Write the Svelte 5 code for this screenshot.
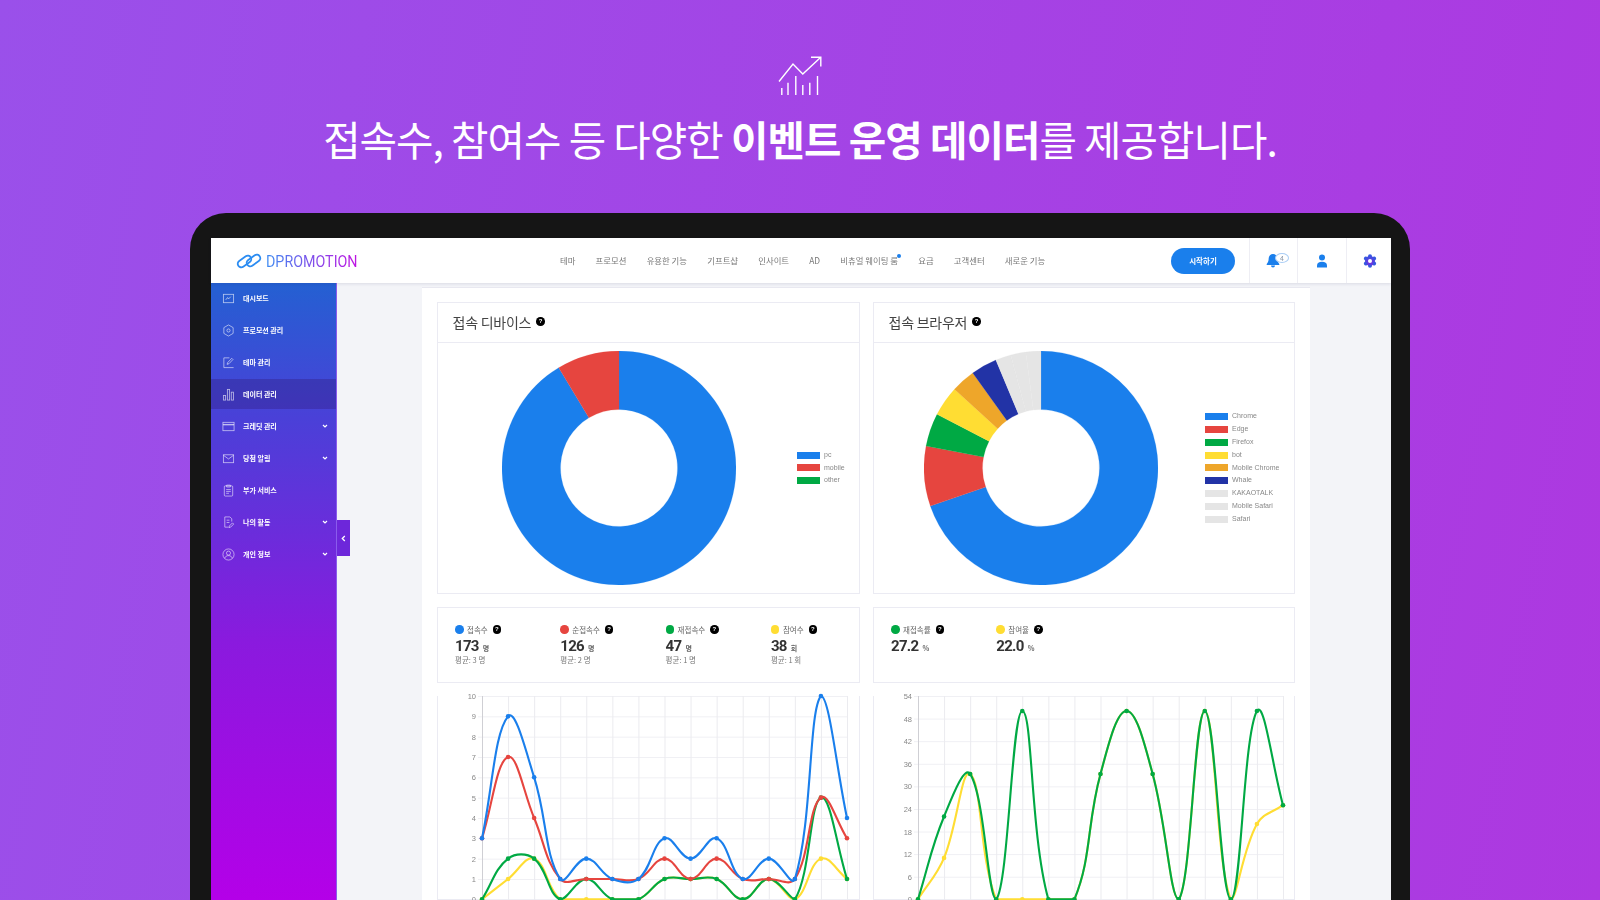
<script>
	const navItems = ['테마', '프로모션', '유용한 기능', '기프트샵', '인사이트', 'AD', '비츄얼 웨이팅 룸', '요금', '고객센터', '새로운 기능'];

	const menu = [
		{ label: '대시보드', icon: 'board' },
		{ label: '프로모션 관리', icon: 'hex' },
		{ label: '테마 관리', icon: 'theme' },
		{ label: '데이터 관리', icon: 'bars', active: true },
		{ label: '크레딧 관리', icon: 'card', more: true },
		{ label: '당첨 알림', icon: 'mail', more: true },
		{ label: '부가 서비스', icon: 'clip' },
		{ label: '나의 활동', icon: 'doc', more: true },
		{ label: '개인 정보', icon: 'user', more: true }
	];

	const BLUE = '#1a7fec';
	const RED = '#e6453f';
	const GREEN = '#00a944';
	const YELLOW = '#ffdd33';
	const ORANGE = '#eea62a';
	const NAVY = '#2233a6';
	const GREY = '#e5e5e5';

	const devices = [
		{ name: 'pc', color: BLUE, end: 329 },
		{ name: 'mobile', color: RED, end: 360 },
		{ name: 'other', color: GREEN, end: 360 }
	];

	const browsers = [
		{ name: 'Chrome', color: BLUE, end: 251 },
		{ name: 'Edge', color: RED, end: 280.8 },
		{ name: 'Firefox', color: GREEN, end: 297.3 },
		{ name: 'bot', color: YELLOW, end: 312.3 },
		{ name: 'Mobile Chrome', color: ORANGE, end: 324.3 },
		{ name: 'Whale', color: NAVY, end: 337.3 },
		{ name: 'KAKAOTALK', color: GREY, end: 345 },
		{ name: 'Mobile Safari', color: GREY, end: 352.5 },
		{ name: 'Safari', color: GREY, end: 360 }
	];

	const visitStats = [
		{ label: '접속수', color: BLUE, value: '173', unit: '명', avg: '평균: 3 명' },
		{ label: '순접속수', color: RED, value: '126', unit: '명', avg: '평균: 2 명' },
		{ label: '재접속수', color: GREEN, value: '47', unit: '명', avg: '평균: 1 명' },
		{ label: '참여수', color: YELLOW, value: '38', unit: '회', avg: '평균: 1 회' }
	];

	const rateStats = [
		{ label: '재접속률', color: GREEN, value: '27.2', unit: '%' },
		{ label: '참여율', color: YELLOW, value: '22.0', unit: '%' }
	];

	const visitSeries = [
		{ color: YELLOW, data: [0, 1, 2, 0, 0, 0, 0, 1, 1, 1, 0, 1, 0, 2, 1] },
		{ color: GREEN, data: [0, 2, 2, 0, 1, 0, 0, 1, 1, 1, 0, 1, 0, 5, 1] },
		{ color: RED, data: [3, 7, 4, 1, 1, 1, 1, 2, 1, 2, 1, 1, 1, 5, 3] },
		{ color: BLUE, data: [3, 9, 6, 1, 2, 1, 1, 3, 2, 3, 1, 2, 1, 10, 4] }
	];

	const rateSeries = [
		{ color: YELLOW, data: [0, 11, 33.3, 0, 0, 0, 0, 33.3, 50, 33.3, 0, 50, 0, 20, 25] },
		{ color: GREEN, data: [0, 22, 33.3, 0, 50, 0, 0, 33.3, 50, 33.3, 0, 50, 0, 50, 25] }
	];

	const PLOT = { left: 44, right: 409, top: 0, bottom: 203.3 };

	function slices(items) {
		let start = 0;
		const out = [];
		for (const item of items) {
			if (item.end > start) out.push({ color: item.color, d: ring(start, item.end) });
			start = item.end;
		}
		return out;
	}

	function ring(a, b, R = 117, r = 58.5, c = 117) {
		const pt = (rad, deg) => {
			const t = (deg * Math.PI) / 180;
			return `${(c + rad * Math.sin(t)).toFixed(2)} ${(c - rad * Math.cos(t)).toFixed(2)}`;
		};
		const large = b - a > 180 ? 1 : 0;
		return `M${pt(R, a)}A${R} ${R} 0 ${large} 1 ${pt(R, b)}L${pt(r, b)}A${r} ${r} 0 ${large} 0 ${pt(r, a)}Z`;
	}

	// same curve as chart.js: tension .4 and control points kept inside the plot
	function points(data, max) {
		const step = (PLOT.right - PLOT.left) / (data.length - 1);
		return data.map((v, i) => ({
			x: PLOT.left + i * step,
			y: PLOT.bottom - (v / max) * (PLOT.bottom - PLOT.top)
		}));
	}

	function curve(data, max) {
		const pts = points(data, max);
		const cap = (v, lo, hi) => Math.min(hi, Math.max(lo, v));
		const cps = pts.map((p, i) => {
			const a = pts[i - 1] || p;
			const b = pts[i + 1] || p;
			const d01 = Math.hypot(p.x - a.x, p.y - a.y);
			const d12 = Math.hypot(b.x - p.x, b.y - p.y);
			const sum = d01 + d12 || 1;
			const fa = (0.4 * d01) / sum;
			const fb = (0.4 * d12) / sum;
			return {
				px: cap(p.x - fa * (b.x - a.x), PLOT.left, PLOT.right),
				py: cap(p.y - fa * (b.y - a.y), PLOT.top, PLOT.bottom),
				nx: cap(p.x + fb * (b.x - a.x), PLOT.left, PLOT.right),
				ny: cap(p.y + fb * (b.y - a.y), PLOT.top, PLOT.bottom)
			};
		});
		let d = `M${pts[0].x} ${pts[0].y}`;
		for (let i = 1; i < pts.length; i++) {
			d += `C${cps[i - 1].nx} ${cps[i - 1].ny} ${cps[i].px} ${cps[i].py} ${pts[i].x} ${pts[i].y}`;
		}
		return d;
	}

	function yTicks(max, by) {
		const out = [];
		for (let v = 0; v <= max; v += by) {
			out.push({ v, y: PLOT.bottom - (v / max) * (PLOT.bottom - PLOT.top) });
		}
		return out;
	}

	const xTicks = Array.from({ length: 15 }, (_, i) => PLOT.left + (i * (PLOT.right - PLOT.left)) / 14);

	const charts = [
		{ series: visitSeries, max: 10, by: 1, stats: visitStats },
		{ series: rateSeries, max: 54, by: 6, stats: rateStats }
	];

	const gearLobes = [0, 60, 120, 180, 240, 300];
</script>

<div class="page">
	<section class="hero">
		<svg class="hero-icon" width="46" height="42" viewBox="0 0 46 42" fill="none" stroke="#fff" stroke-width="1.4">
			<path d="M2 26.500 16 9l9.800 10L43.500 2.500" />
			<path d="M34 2.200h9.800V11.500" />
			<path d="M4.800 40v-7M11 40V27.700M18.800 40V21M25.800 40V30M32.800 40V27.700M40.500 40V21" />
		</svg>
		<h1>접속수, 참여수 등 다양한 <b>이벤트 운영 데이터</b>를 제공합니다.</h1>
	</section>

	<div class="frame">
		<div class="screen">
			<header>
				<div class="logo">
					<svg width="26" height="16" viewBox="0 0 26 16" fill="none" stroke="#2b8cf2" stroke-width="1.800">
						<rect x="1" y="5" width="15" height="7" rx="3.500" transform="rotate(-35 8.500 8.500)" />
						<rect x="10" y="4" width="15" height="7" rx="3.500" transform="rotate(-35 17.500 7.500)" />
					</svg>
					<span>DPROMOTION</span>
				</div>
				<nav>
					{#each navItems as item, i}
						<span class="nav-item" class:dotted={i === 6}>{item}</span>
					{/each}
				</nav>
				<div class="actions">
					<button>시작하기</button>
					<div class="cell bell">
						<svg width="14" height="15" viewBox="0 0 14 15" fill="#1a7fec">
							<path d="M7 1a4.300 4.300 0 0 0-4.300 4.300c0 3-1 4.700-2 5.700v.9h12.600V11c-1-1-2-2.700-2-5.700A4.300 4.300 0 0 0 7 1ZM5 12.600a2 2 0 0 0 4 0Z" />
						</svg>
						<span class="badge">4</span>
					</div>
					<div class="cell">
						<svg width="12" height="14" viewBox="0 0 12 14" fill="#1a7fec">
							<circle cx="6" cy="3.500" r="3" />
							<path d="M1 13.500V11.500C1 9 3 7.800 6 7.800s5 1.200 5 3.700v2Z" />
						</svg>
					</div>
					<div class="cell last">
						<svg width="14" height="14" viewBox="0 0 14 14">
							<defs>
								<linearGradient id="gear" gradientUnits="userSpaceOnUse" x1="0" y1="0" x2="0" y2="14">
									<stop offset="0" stop-color="#2b5ee0" />
									<stop offset="1" stop-color="#9a14e0" />
								</linearGradient>
							</defs>
							<circle cx="7" cy="7" r="5" fill="url(#gear)" />
							{#each gearLobes as deg}
								<circle cx="7" cy="2.200" r="2" fill="url(#gear)" transform="rotate({deg} 7 7)" />
							{/each}
							<circle cx="7" cy="7" r="2" fill="#fff" />
						</svg>
					</div>
				</div>
			</header>

			<div class="body">
				<aside>
					<ul>
						{#each menu as item}
							<li class:active={item.active}>
								<svg width="13" height="13" viewBox="0 0 14 14" fill="none" stroke="#fff" stroke-opacity=".65" stroke-width=".9">
									{#if item.icon === 'board'}
										<rect x="1.500" y="2.500" width="11" height="9" />
										<path d="M4 8.500 6 6l1 1.500L9.500 5" />
									{:else if item.icon === 'hex'}
										<path d="M7 1l5 2.900v6.200L7 13l-5-2.900V3.900Z" />
										<circle cx="7" cy="7" r="1.700" />
									{:else if item.icon === 'theme'}
										<path d="M2 2v10.500h10.500M2 2h6" />
										<path d="M5.500 9l.6-2 4.400-4.500 1.300 1.300L7.500 8.300Z" />
									{:else if item.icon === 'bars'}
										<rect x="1.500" y="8" width="2.400" height="5" />
										<rect x="5.800" y="1.500" width="2.400" height="11.500" />
										<rect x="10" y="4.500" width="2.400" height="8.500" />
									{:else if item.icon === 'card'}
										<rect x="1" y="2.500" width="12" height="9" />
										<path d="M1 5h12" stroke-width="1.500" />
									{:else if item.icon === 'mail'}
										<rect x="1.500" y="3" width="11" height="8.500" />
										<path d="m1.500 3.500 5.500 4 5.500-4" />
									{:else if item.icon === 'clip'}
										<rect x="2.500" y="2" width="9" height="11" rx="1" />
										<path d="M5 1.200h4v2H5ZM4.500 6h5M4.500 8h5M4.500 10h3" />
									{:else if item.icon === 'doc'}
										<path d="M10.500 6V3L8.500 1H3v11h4" />
										<path d="M5 4.500h3M5 7h3M7.500 12.500l.5-1.800 3.300-3.300 1.300 1.300-3.300 3.300Z" />
									{:else}
										<circle cx="7" cy="7" r="6" />
										<circle cx="7" cy="5.500" r="2.200" />
										<path d="M3 11c.5-2 2-2.800 4-2.800s3.500.8 4 2.800" />
									{/if}
								</svg>
								<span>{item.label}</span>
								{#if item.more}
									<svg class="chev" width="6" height="5" viewBox="0 0 6 5" fill="none" stroke="#fff" stroke-width="1.200">
										<path d="m1 1 2 2 2-2" />
									</svg>
								{/if}
							</li>
						{/each}
					</ul>
					<div class="collapse">
						<svg width="5" height="7" viewBox="0 0 5 7" fill="none" stroke="#fff" stroke-width="1.300">
							<path d="M3.800 1 1.300 3.500l2.500 2.500" />
						</svg>
					</div>
				</aside>

				<main>
					<div class="panel">
						<div class="card donut devices">
							<h2>접속 디바이스 <i class="help big">?</i></h2>
							<div class="donut-body">
								<svg width="234" height="234" viewBox="0 0 234 234">
									{#each slices(devices) as s}
										<path d={s.d} fill={s.color} stroke={s.color} stroke-width=".2" />
									{/each}
								</svg>
								<ul class="legend">
									{#each devices as item}
										<li><em style="background:{item.color}"></em>{item.name}</li>
									{/each}
								</ul>
							</div>
						</div>

						<div class="card donut browsers">
							<h2>접속 브라우저 <i class="help big">?</i></h2>
							<div class="donut-body">
								<svg width="234" height="234" viewBox="0 0 234 234">
									{#each slices(browsers) as s}
										<path d={s.d} fill={s.color} stroke={s.color} stroke-width=".2" />
									{/each}
								</svg>
								<ul class="legend">
									{#each browsers as item}
										<li><em style="background:{item.color}"></em>{item.name}</li>
									{/each}
								</ul>
							</div>
						</div>

						{#each charts as chart}
							<div class="card stats">
								{#each chart.stats as stat}
									<div class="stat">
										<div class="stat-label">
											<em style="background:{stat.color}"></em>{stat.label}<i class="help">?</i>
										</div>
										<div class="stat-value">{stat.value} <small>{stat.unit}</small></div>
										{#if stat.avg}<div class="stat-avg">{stat.avg}</div>{/if}
									</div>
								{/each}
							</div>
						{/each}

						{#each charts as chart}
							<div class="card line">
								<svg width="420" height="206" viewBox="0 0 420 206">
									{#each yTicks(chart.max, chart.by) as t}
										<line x1={PLOT.left - 4} x2={PLOT.right} y1={t.y + 0.5} y2={t.y + 0.5} stroke="#f0f0f4" />
										<text x={PLOT.left - 6} y={t.y + 3}>{t.v}</text>
									{/each}
									{#each xTicks as x, i}
										<line x1={x + 0.5} x2={x + 0.5} y1={PLOT.top} y2={PLOT.bottom + 4} stroke={i === 0 ? '#cfcfd4' : '#ebebef'} />
									{/each}
									{#each chart.series as s}
										<path d={curve(s.data, chart.max)} fill="none" stroke={s.color} stroke-width="2.100" />
										{#each points(s.data, chart.max) as p}
											<circle cx={p.x} cy={p.y} r="2.300" fill={s.color} />
										{/each}
									{/each}
								</svg>
							</div>
						{/each}
					</div>
				</main>
			</div>
		</div>
	</div>
</div>

<style>
	:global(body) {
		overflow: hidden;
	}

	.page {
		height: 900px;
		overflow: hidden;
		background: linear-gradient(100deg, #9a50ea, #ad38e0);
		font-family: 'Noto Sans CJK KR', 'Noto Sans', sans-serif;
		color: #444;
	}

	.hero {
		height: 213px;
		padding-top: 55px;
		box-sizing: border-box;
		display: flex;
		flex-direction: column;
		align-items: center;
		color: #fff;
	}

	.hero-icon {
		display: block;
	}

	h1 {
		margin: 14px 0 0;
		font-size: 40.700px;
		line-height: 56px;
		font-weight: 400;
		letter-spacing: -0.95px;
		white-space: nowrap;
	}

	h1 b {
		font-weight: 700;
	}

	.frame {
		width: 1220px;
		height: 687px;
		margin: 0 auto;
		padding: 25px 19px 0 21px;
		box-sizing: border-box;
		background: #151515;
		border-radius: 36px 36px 0 0;
	}

	.screen {
		height: 662px;
		display: flex;
		flex-direction: column;
		background: #f3f4f8;
		filter: blur(0.3px);
	}

	header {
		height: 45px;
		flex: none;
		display: flex;
		align-items: center;
		background: #fff;
		box-shadow: 0 1px 3px rgba(40, 40, 90, 0.12);
		position: relative;
		z-index: 2;
	}

	.logo {
		width: 349px;
		flex: none;
		display: flex;
		align-items: center;
		gap: 4px;
		padding-left: 25px;
		box-sizing: border-box;
	}

	.logo span {
		display: inline-block;
		font-family: Roboto, sans-serif;
		font-size: 17px;
		background: linear-gradient(90deg, #3d8cf2, #c012e2);
		-webkit-background-clip: text;
		background-clip: text;
		color: transparent;
		transform: scaleX(0.84);
		transform-origin: left center;
	}

	nav {
		display: flex;
		gap: 20.200px;
		margin-top: -2px;
		font-size: 8.400px;
		color: #777;
	}

	.nav-item {
		position: relative;
		white-space: nowrap;
	}

	.dotted::after {
		content: '';
		position: absolute;
		right: -3px;
		top: 0;
		width: 4px;
		height: 4px;
		border-radius: 50%;
		background: #1a7fec;
	}

	.actions {
		margin-left: auto;
		height: 100%;
		display: flex;
		align-items: center;
	}

	button {
		width: 64px;
		height: 26px;
		margin-right: 14px;
		padding: 0;
		border: 0;
		border-radius: 13px;
		background: #1a7fec;
		color: #fff;
		font: 700 7.500px 'Noto Sans CJK KR', sans-serif;
	}

	.cell {
		width: 49px;
		height: 100%;
		display: flex;
		align-items: center;
		justify-content: center;
		border-left: 1px solid #eeeef4;
		box-sizing: border-box;
		position: relative;
	}

	.cell.last {
		width: 45px;
		padding-left: 2px;
	}

	.bell {
		width: 48px;
		padding-right: 2px;
	}

	.badge {
		position: absolute;
		left: 25px;
		top: 15px;
		width: 12px;
		height: 8px;
		border: 1px solid #a9cdf5;
		border-radius: 50%;
		background: #fff;
		font-size: 7px;
		line-height: 8px;
		text-align: center;
		color: #8a97a8;
	}

	.body {
		flex: 1;
		min-height: 0;
		display: flex;
	}

	aside {
		width: 126px;
		flex: none;
		position: relative;
		box-sizing: border-box;
		border-right: 1px solid #8a5cec;
		background: linear-gradient(#2460d2, #4a40d8 22%, #8a1ade 58%, #b400e8);
	}

	aside ul {
		margin: -1px 0 0;
		padding: 0;
		list-style: none;
	}

	aside li {
		height: 32px;
		display: flex;
		align-items: center;
		gap: 8px;
		padding: 0 8px 0 11px;
		box-sizing: border-box;
		font-size: 7px;
		font-weight: 700;
		color: #fff;
		position: relative;
	}

	aside li.active::before {
		content: '';
		position: absolute;
		inset: 1px 0;
		background: rgba(50, 30, 130, 0.38);
	}

	aside li svg,
	aside li span {
		position: relative;
	}

	.chev {
		margin-left: auto;
	}

	.collapse {
		position: absolute;
		top: 237px;
		right: -14px;
		width: 13px;
		height: 36px;
		display: flex;
		align-items: center;
		justify-content: flex-start;
		padding-left: 4px;
		box-sizing: border-box;
		background: #6d27da;
	}

	main {
		flex: 1;
		min-width: 0;
		padding: 4px 81px 0 85px;
		overflow: hidden;
	}

	.panel {
		height: 100%;
		box-sizing: border-box;
		padding: 14px 15px 0 15px;
		display: grid;
		grid-template-columns: 423px 422px;
		grid-template-rows: 292px 76px 1fr;
		gap: 13px;
		background: #fff;
		border-top: 1px solid #e8e8f0;
	}

	.card {
		border: 1px solid #ebebf3;
		box-sizing: border-box;
		min-height: 0;
	}

	h2 {
		height: 37px;
		margin: 0;
		padding: 0 0 2px 14.500px;
		display: flex;
		align-items: center;
		gap: 5px;
		font-size: 14px;
		font-weight: 400;
		letter-spacing: -0.25px;
		color: #444;
		border-bottom: 1px solid #ebebf3;
		box-sizing: content-box;
	}

	.help {
		flex: none;
		width: 8.500px;
		height: 8.500px;
		border-radius: 50%;
		background: #000;
		color: #fff;
		font: 700 6px/8.500px 'Liberation Sans', sans-serif;
		text-align: center;
	}

	.donut-body {
		height: 250px;
		display: flex;
		align-items: center;
	}

	.devices .donut-body {
		padding-left: 63.500px;
		gap: 61.500px;
	}

	.browsers .donut-body {
		padding-left: 50px;
		gap: 47px;
	}

	.legend {
		margin: 0;
		padding: 0;
		list-style: none;
		font: 7px/12.800px 'Liberation Sans', sans-serif;
		color: #888;
	}

	.legend li {
		display: flex;
		align-items: center;
		gap: 4px;
		white-space: nowrap;
	}

	.legend em {
		width: 23px;
		height: 7px;
	}

	.stats {
		display: flex;
		padding: 15px 0 0 17px;
	}

	.stat {
		flex: none;
		width: 105.300px;
	}

	.stat-label {
		display: flex;
		align-items: center;
		height: 13px;
		font-size: 7.500px;
		color: #666;
	}

	.stat-label em {
		width: 8.500px;
		height: 8.500px;
		margin-right: 3.500px;
		border-radius: 50%;
	}

	.stat-label .help {
		margin-left: 5px;
	}

	.stat-value {
		margin-top: 2px;
		font: 700 15px/17px Roboto, sans-serif;
		letter-spacing: -0.7px;
		color: #333;
	}

	.stat-value small {
		font: 700 7px 'Noto Sans CJK KR', sans-serif;
		letter-spacing: 0;
		color: #666;
		margin-left: 1px;
	}

	.stat-avg {
		margin-top: -1px;
		font-size: 7.500px;
		line-height: 11px;
		color: #777;
	}

	.line {
		border-top: 0;
	}

	.line svg {
		display: block;
		overflow: visible;
	}

	.line text {
		font: 7.500px 'Liberation Sans', sans-serif;
		fill: #888;
		text-anchor: end;
	}
</style>
